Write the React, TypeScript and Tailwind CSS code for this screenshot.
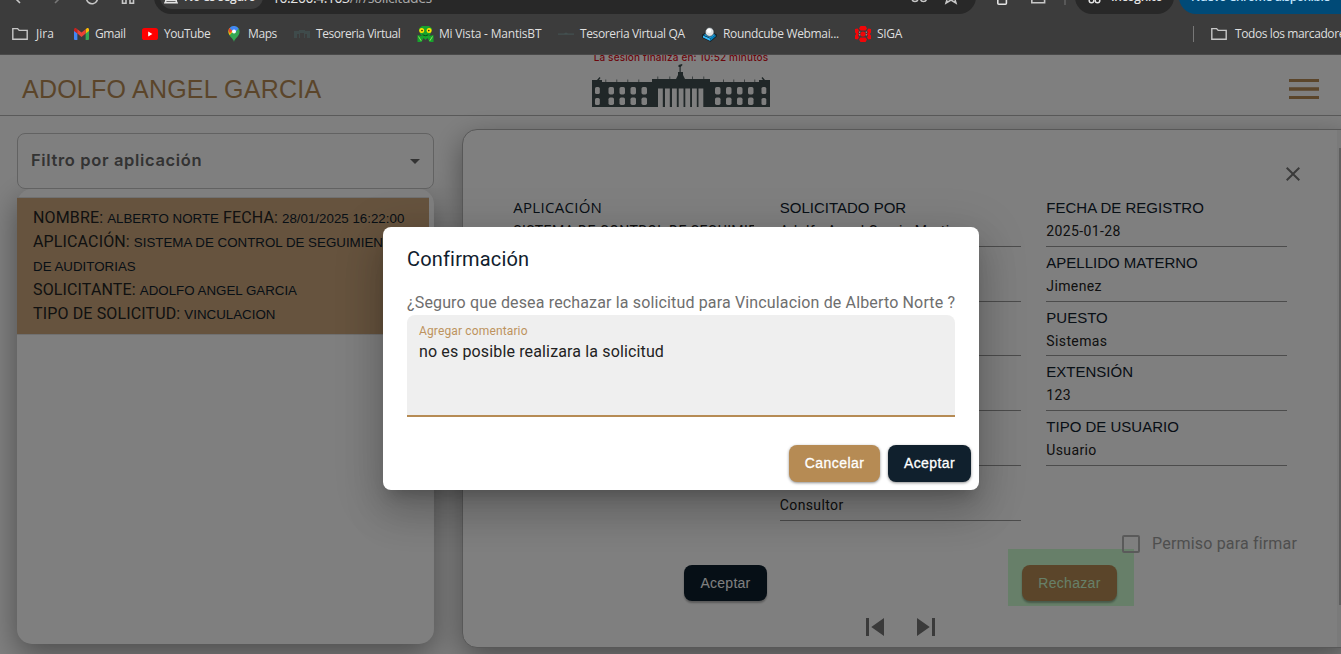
import React from "react";
import { MdClose, MdSkipNext, MdSkipPrevious } from "react-icons/md";

const Folder = () => (
  <svg width="16" height="14" viewBox="0 0 16 14" fill="none" stroke="#c7c7c7" strokeWidth="1.4">
    <path d="M.8 12.2V1.6H5.6L7.2 3.4H15.2V12.2Z" />
  </svg>
);

const Gmail = () => (
  <svg width="15" height="12" viewBox="0 0 16 12" preserveAspectRatio="none">
    <path d="M0 2V11a1 1 0 0 0 1 1H3.6V4.8Z" fill="#4285f4" />
    <path d="M16 2V11a1 1 0 0 1-1 1H12.4V4.8Z" fill="#34a853" />
    <path d="M0 1.6C0 .2 1.5-.4 2.6.4L3.6 1.2V5.6L0 2.9Z" fill="#c5221f" />
    <path d="M16 1.6C16 .2 14.5-.4 13.4.4L12.4 1.2V5.6L16 2.9Z" fill="#fbbc04" />
    <path d="M3.6 1.2L8 4.5L12.4 1.2V5.6L8 8.9L3.6 5.6Z" fill="#ea4335" />
  </svg>
);

const YouTube = () => (
  <svg width="16" height="12" viewBox="0 0 16 12">
    <rect width="16" height="12" rx="2.6" fill="#f00" />
    <path d="M6.2 3.6L10.4 6L6.2 8.4Z" fill="#fff" />
  </svg>
);

const Maps = () => (
  <svg width="12" height="16" viewBox="0 0 12 16">
    <path d="M6 16C5.4 12.4 .4 10.4 .4 5.6A5.6 5.6 0 0 1 11.6 5.6C11.6 10.4 6.6 12.4 6 16Z" fill="#34a853" />
    <path d="M1.7 9.2C.9 8 .4 7 .4 5.6Q.4 3.4 1.7 2L5 5.2Z" fill="#fbbc04" />
    <path d="M1.7 2L4.4 4.6L2 7.4L.5 4.8Q.7 3.2 1.7 2Z" fill="#ea4335" />
    <path d="M1.7 2A5.6 5.6 0 0 1 10.6 2.4L6.4 7.2L4 4.4Z" fill="#4285f4" />
    <circle cx="6" cy="5.6" r="2" fill="#fff" />
  </svg>
);

const MiniBuilding = () => (
  <svg width="16" height="8" viewBox="0 0 16 8" fill="#3f4b4b">
    <path d="M0 1H5V0H11V1H16V8H13V4H11V8H10V3H6V8H5V4H3V8H0Z" />
  </svg>
);

const FaintLine = () => (
  <svg width="16" height="4" viewBox="0 0 16 4" fill="#435050">
    <path d="M0 1.5H6L8 .4L10 1.5H16V2.7H0Z" />
  </svg>
);

const Mantis = () => (
  <svg width="17" height="16" viewBox="0 0 17 16">
    <path d="M2 2.5L5 0H12L15 2.5L13.5 8L12 10L16.5 9V16H12.5L10.5 12L8.5 14L6.5 12L4.5 16H.5V9L5 10L3.2 8Z" fill="#17a32d" />
    <path d="M1.5 10.5L4.2 14.8M15.5 10.5L12.8 14.8" stroke="#8ce05d" />
    <circle cx="4.7" cy="4.6" r="2.5" fill="#ffe100" />
    <circle cx="12.1" cy="4.6" r="2.5" fill="#ffe100" />
    <circle cx="5" cy="4.6" r=".8" fill="#222" />
    <circle cx="11.8" cy="4.6" r=".8" fill="#222" />
    <path d="M5.5 8.8Q8.5 10.6 11.4 8.8" stroke="#064d11" fill="none" />
  </svg>
);

const Roundcube = () => (
  <svg width="15" height="15" viewBox="0 0 15 15">
    <path d="M.3 7.500L7.500 4L14.700 7.500V9.500L8.500 14.800L.3 10.800Z" fill="#10181c" />
    <path d="M1 8.400L8.500 11.800L8.300 14L1 10.400Z" fill="#37beff" />
    <path d="M8.500 11L13.800 8L13.600 9.600L8.500 14Z" fill="#0080be" />
    <path d="M1.500 8L8.500 11.200L13.500 8L11 6.500H4Z" fill="#1a9bdc" />
    <circle cx="7.600" cy="5" r="4.400" fill="#dfe2e4" stroke="#20282c" strokeWidth=".6" />
    <circle cx="7" cy="3.800" r="2.200" fill="#fff" />
  </svg>
);

const Siga = () => (
  <svg width="16" height="16" viewBox="0 0 16 16" fill="#f30508">
    <circle cx="8" cy="8" r="2.6" />
    <path d="M5.500 0H10.500L12 2.500L10.500 4.500H5.500L4 2.500ZM5.500 16H10.500L12 13.500L10.500 11.500H5.500L4 13.500Z" />
    <path d="M0 3L2.600 2.600L4 4.500L3 6.500L4.200 8L3 9.500L4 11.500L2.600 13.400L0 13V9.500L1.200 8L0 6.500ZM16 3L13.400 2.600L12 4.500L13 6.500L11.800 8L13 9.500L12 11.500L13.400 13.400L16 13V9.500L14.800 8L16 6.500Z" />
    <path d="M4.700 5.500V10.500M11.300 5.500V10.500" stroke="#b9aaaa" strokeWidth=".8" strokeDasharray="1.500 1" />
  </svg>
);

type BookmarkProps = { icon: React.ReactNode; text: string; box: string; gap: string; track?: string };

const Bookmark = ({ icon, text, box, gap, track = "" }: BookmarkProps) => (
  <div className={`flex shrink-0 items-center whitespace-nowrap ${box} ${gap}`}>
    {icon}
    <span className={track}>{text}</span>
  </div>
);

const Toolbar = () => (
  <div className="h-[14px] overflow-hidden">
    <div className="-mt-5 flex h-[34px] items-center font-['Open_Sans',sans-serif] text-[13px] text-[#e3e3e3]">
      <svg width="154" height="34" viewBox="0 0 154 34" fill="none" stroke="#c7c7c7" strokeWidth="1.6" className="shrink-0">
        <path d="M20 11L14 17L20 23" />
        <path d="M55 11L61 17L55 23" stroke="#777" />
        <path d="M86.500 18A5.500 5.500 0 1 0 97 16" />
        <path d="M122.500 14V23.200H126V19H130V23.200H133.500V14" />
      </svg>
      <div className="flex h-[34px] w-[822px] shrink-0 items-center rounded-full bg-[#282828] pl-1.5">
        <div className="flex h-6 w-[103px] items-center gap-1.5 rounded-full bg-[#3c3c3c] pl-1">
          <svg width="14" height="14" viewBox="0 0 14 14" fill="none" stroke="#e3e3e3" strokeWidth="1.500">
            <path d="M7 1L13 12.800H1ZM1 10.600H13" />
          </svg>
          <span className="whitespace-nowrap text-[12px] font-semibold tracking-[-0.3px]">No es seguro</span>
        </div>
        <span className="ml-[9px] w-[160px] whitespace-nowrap text-[14px] tracking-[-0.45px]">
          10.200.4.103<span className="text-[#a8a8a8]">/#/solicitudes</span>
        </span>
        <svg width="60" height="34" viewBox="0 0 60 34" fill="none" stroke="#c7c7c7" strokeWidth="1.500" className="ml-[475px]">
          <circle cx="8" cy="18.500" r="3" />
          <circle cx="16.500" cy="18.500" r="3" />
          <path d="M39 23L40.500 18L36 15H42L44 9.500L46 15H52L47.500 18L49 23L44 20Z" />
        </svg>
      </div>
      <svg width="99" height="34" viewBox="0 0 99 34" fill="none" stroke="#e3e3e3" strokeWidth="1.600" className="shrink-0">
        <rect x="21.800" y="12" width="8.600" height="12.200" rx="1" />
        <path d="M55.800 15V22.800H68.600V15" stroke="#c7c7c7" />
        <path d="M89 10V25" stroke="#606060" />
      </svg>
      <div className="flex h-[34px] w-[99px] shrink-0 items-center rounded-full bg-[#282828] pl-3">
        <svg width="16" height="14" viewBox="0 0 16 14" fill="none" stroke="#e3e3e3" strokeWidth="1.500">
          <circle cx="4.500" cy="10.500" r="2.300" />
          <circle cx="10.500" cy="10.500" r="2.300" />
        </svg>
        <span className="ml-2 text-[12px] font-semibold tracking-[-0.3px]">Incógnito</span>
      </div>
      <div className="ml-[5px] flex h-[34px] w-[220px] shrink-0 items-center rounded-full bg-[#004a77] pl-[12px] text-[12px] font-semibold text-[#c2e7ff]">
        <span className="whitespace-nowrap tracking-[-0.5px]">Nuevo Chrome disponible</span>
        <span className="ml-2">⋮</span>
      </div>
    </div>
  </div>
);

const Bookmarks = () => (
  <div className="flex h-10 items-center overflow-hidden pl-3 font-['Open_Sans','Noto_Sans',sans-serif] text-[12px] text-[#dfdfdf]">
    <Bookmark icon={<Folder />} text="Jira" box="w-[62px]" gap="gap-2" />
    <Bookmark icon={<Gmail />} text="Gmail" box="w-[68px]" gap="gap-[6px]" track="tracking-[-0.4px]" />
    <Bookmark icon={<YouTube />} text="YouTube" box="w-[86px]" gap="gap-[6px]" track="tracking-[-0.45px]" />
    <Bookmark icon={<Maps />} text="Maps" box="w-[66px]" gap="gap-2" track="tracking-[-0.4px]" />
    <Bookmark icon={<MiniBuilding />} text="Tesoreria Virtual" box="w-[123px]" gap="gap-[6px]" track="tracking-[-0.45px]" />
    <Bookmark icon={<Mantis />} text="Mi Vista - MantisBT" box="w-[141px]" gap="gap-[5px]" track="tracking-[-0.2px]" />
    <Bookmark icon={<FaintLine />} text="Tesoreria Virtual QA" box="w-[144px]" gap="gap-[6px]" track="tracking-[-0.37px]" />
    <Bookmark icon={<Roundcube />} text="Roundcube Webmai..." box="w-[153px]" gap="gap-[6px]" track="tracking-[-0.35px]" />
    <Bookmark icon={<Siga />} text="SIGA" box="w-[338px]" gap="gap-[6px]" track="tracking-[-0.3px]" />
    <div className="h-4 w-[18px] shrink-0 border-l border-[#777]" />
    <Bookmark icon={<Folder />} text="Todos los marcadores" box="w-[160px]" gap="gap-2" track="tracking-[-0.4px]" />
  </div>
);

const Building = () => (
  <svg width="178" height="44" viewBox="0 0 178 44" className="shrink-0">
    <g fill="#404f50">
      <path d="M0 16H10V18H60V15H84L86 11V8H87.500V3H86.500V1L90 0L90.500 1L88.700 3V8H91V11L93 15H118V18H167V16H178V43H0Z" />
      <path d="M5 16L7.500 13L8.500 14L7 16ZM173 16L170.500 13L169.500 14L171 16Z" />
      <path d="M13.500 15.500H14.200V18H13.500ZM24.500 15.500H25.200V18H24.500ZM35.500 15.500H36.200V18H35.500ZM46.500 15.500H47.200V18H46.500ZM65.500 12.500H66.200V15H65.500ZM77.500 12.500H78.200V15H77.500ZM100 12.500H100.700V15H100ZM111.500 12.500H112.200V15H111.500ZM131 15.500H131.700V18H131ZM141.500 15.500H142.200V18H141.500ZM152 15.500H152.700V18H152ZM162.500 15.500H163.200V18H162.500Z" />
    </g>
    <g fill="#fff">
      {[3, 169.500].map((x) => (
        <g key={x}>
          <rect x={x} y="23" width="4.800" height="7" rx="1.600" />
          <rect x={x} y="34" width="4.800" height="7" rx="1.600" />
        </g>
      ))}
      {[16.500, 27.500, 38.500, 49.500, 123, 134, 145, 156].map((x) => (
        <g key={x}>
          <rect x={x} y="23" width="5.500" height="7.500" rx="1.700" />
          <rect x={x} y="33.500" width="5.500" height="7.500" rx="1.700" />
        </g>
      ))}
      {[66, 73, 80, 86.700, 93.300, 100, 106.500].map((x) => (
        <rect key={x} x={x} y="24.500" width="4.800" height="18.500" />
      ))}
    </g>
  </svg>
);

const Header = () => (
  <header className="flex h-[61px] shrink-0 items-start border-b border-[#b4b4b4]">
    <h1 className="w-[592px] shrink-0 pl-[22px] pt-[20px] font-['Liberation_Sans',sans-serif] text-[25px] leading-7 tracking-[0.23px] text-[#b68b54]">
      ADOLFO ANGEL GARCIA
    </h1>
    <div className="flex w-[178px] shrink-0 flex-col items-center">
      <p className="-mt-[5px] h-[14px] whitespace-nowrap font-['Inter',sans-serif] text-[10px] font-medium leading-[15px] tracking-[0.15px] text-[#d80d18]">
        La sesión finaliza en: 10:52 minutos
      </p>
      <Building />
    </div>
    <div className="flex flex-1 justify-end pr-[22px] pt-[24px]">
      <svg width="30" height="20" viewBox="0 0 30 20" fill="#b68b54">
        <path d="M0 0H30V3H0ZM0 8.300H30V11.700H0ZM0 17H30V20H0Z" />
      </svg>
    </div>
  </header>
);

const RowLine = ({ label, value }: { label: string; value: string }) => (
  <>
    <span className="text-[16px] leading-none tracking-[0.14px] text-[#222]">{label}</span>{" "}
    <span className="font-['Liberation_Sans',sans-serif] text-[13.333px] leading-none text-[#10202d]">{value}</span>
  </>
);

const Sidebar = () => (
  <aside className="ml-[17px] flex w-[417px] shrink-0 flex-col pt-[17px]">
    <div className="z-10 flex h-14 items-center justify-between rounded-[8px] border border-[#c4c4c4] bg-white pl-[13px] pr-[13px]">
      <span className="-mt-[2px] font-['Inter',sans-serif] text-[16.500px] font-semibold tracking-[0.65px] text-[#666]">Filtro por aplicación</span>
      <svg width="10" height="5" viewBox="0 0 10 5" fill="#666">
        <path d="M0 0H10L5 5Z" />
      </svg>
    </div>
    <div className="h-[455px] rounded-[15px] bg-white pt-2 shadow-[0_10px_30px_rgba(0,0,0,0.4)]">
      <div className="h-[138px] w-[412px] border-y border-[#e0e0e0] bg-[#cca77c] pl-4 pt-[8px] font-['Roboto',sans-serif] text-[16px] leading-6">
        <div className="whitespace-nowrap">
          <RowLine label="NOMBRE:" value="ALBERTO NORTE" /> <RowLine label="FECHA:" value="28/01/2025 16:22:00" />
        </div>
        <div className="w-[375px]">
          <RowLine label="APLICACIÓN:" value="SISTEMA DE CONTROL DE SEGUIMIENTO DE AUDITORIAS" />
        </div>
        <div>
          <RowLine label="SOLICITANTE:" value="ADOLFO ANGEL GARCIA" />
        </div>
        <div>
          <RowLine label="TIPO DE SOLICITUD:" value="VINCULACION" />
        </div>
      </div>
    </div>
  </aside>
);

type FieldData = { label: string; value: string; labelFont?: string };

const columns: FieldData[][] = [
  [
    {
      label: "APLICACIÓN",
      value: "SISTEMA DE CONTROL DE SEGUIMIENTO",
      labelFont: "-mt-px mb-px font-['Open_Sans',sans-serif] text-[15px] tracking-[0.28px]",
    },
    { label: "", value: "" },
    { label: "", value: "" },
    { label: "", value: "" },
    { label: "", value: "" },
  ],
  [
    { label: "SOLICITADO POR", value: "Adolfo Angel Garcia Martinez" },
    { label: "", value: "" },
    { label: "", value: "" },
    { label: "", value: "" },
    { label: "", value: "" },
    { label: "", value: "Consultor" },
  ],
  [
    { label: "FECHA DE REGISTRO", value: "2025-01-28" },
    { label: "APELLIDO MATERNO", value: "Jimenez" },
    { label: "PUESTO", value: "Sistemas" },
    { label: "EXTENSIÓN", value: "123" },
    { label: "TIPO DE USUARIO", value: "Usuario" },
  ],
];

const Field = ({ label, value, labelFont = "font-['Liberation_Sans',sans-serif] text-[15px]" }: FieldData) => (
  <div className="flex h-[54.75px] flex-col overflow-hidden border-b border-[#999] pt-[5px]">
    <span className={`h-[22px] whitespace-nowrap leading-[22px] text-[#10202d] ${labelFont}`}>{label}</span>
    <span className="h-6 whitespace-nowrap font-['Roboto',sans-serif] text-[14px] leading-6 tracking-[0.38px] text-[#222]">{value}</span>
  </div>
);

const Detail = () => (
  <section className="ml-7 mt-[13px] flex h-[519px] w-[885px] shrink-0 rounded-l-[15px] border border-[#b0b0b0] bg-white shadow-[0_10px_30px_rgba(0,0,0,0.4)]">
    <div className="flex w-[874px] shrink-0 flex-col">
      <div className="flex justify-end pr-[32px] pt-[32px]">
        <MdClose size={24} className="text-[#757575]" />
      </div>
      <div className="mt-[6px] flex h-[329px] gap-[25.500px] pl-[50.300px]">
        {columns.map((fields, i) => (
          <div key={i} className="w-[241px] shrink-0">
            {fields.map((field, j) => (
              <Field key={j} {...field} />
            ))}
          </div>
        ))}
      </div>
      <div className="z-10 mt-[14px] flex h-[18px] items-center justify-end gap-3 pr-[40px]">
        <div className="h-[18px] w-[18px] rounded-[2px] border-2 border-[#b5b5b5]" />
        <span className="font-['Roboto',sans-serif] text-[16px] tracking-[0.17px] text-[#9d9d9d]">Permiso para firmar</span>
      </div>
      <div className="-mt-[4px] flex h-[59px] items-start pl-[221px]">
        <button className="mt-[16px] h-[36px] w-[83px] rounded-[8px] bg-[#0c1e2c] font-['Liberation_Sans',sans-serif] text-[14px] tracking-[0.25px] text-white shadow-[0_2px_2px_rgba(0,0,0,0.3)]">
          Aceptar
        </button>
        <div className="ml-[241px] h-[57px] w-[126px] bg-[#ceffd2] pl-[14px] pt-4">
          <button className="h-[36px] w-[95px] rounded-[8px] bg-[#b68b54] font-['Liberation_Sans',sans-serif] text-[14px] tracking-[0.3px] text-[#ceffd2] shadow-[0_2px_2px_rgba(0,0,0,0.3)]">
            Rechazar
          </button>
        </div>
      </div>
      <div className="mt-[0.500px] flex gap-[15px] pl-[393.500px]">
        <MdSkipPrevious size={36} className="text-[#757575]" />
        <MdSkipNext size={36} className="text-[#757575]" />
      </div>
    </div>
    <div className="w-[10px] shrink-0 bg-[#f4f4f4] pl-[2px] pt-[18px]">
      <div className="h-[457px] bg-[#bcbcbc]" />
    </div>
  </section>
);

const Dialog = () => (
  <div className="absolute left-[383px] top-[172px] flex h-[263px] w-[596px] flex-col rounded-[8px] bg-white px-6 font-['Roboto',sans-serif] shadow-[0_11px_15px_-7px_rgba(0,0,0,0.2),0_24px_38px_3px_rgba(0,0,0,0.14),0_9px_46px_8px_rgba(0,0,0,0.12)]">
    <h2 className="mt-4 h-8 whitespace-nowrap text-[20px] leading-8 tracking-[0.17px] text-[#10202d]">Confirmación</h2>
    <p className="mt-4 h-6 whitespace-nowrap text-[16px] leading-6 tracking-[0.15px] text-[#6e6e6e]">
      ¿Seguro que desea rechazar la solicitud para Vinculacion de Alberto Norte ?
    </p>
    <div className="h-[102px] rounded-t-[8px] border-b-2 border-[#b68b54] bg-[#efefef] px-3 pt-2">
      <div className="h-[17px] whitespace-nowrap text-[12px] leading-4 tracking-[0.14px] text-[#bd935e]">Agregar comentario</div>
      <div className="whitespace-nowrap text-[16px] leading-6 tracking-[0.14px] text-[#222]">no es posible realizara la solicitud</div>
    </div>
    <div className="-mr-4 mt-7 flex justify-end gap-2 font-['Liberation_Sans',sans-serif] text-[14px] text-white [-webkit-text-stroke:0.3px_white]">
      <button className="h-[37px] w-[91px] rounded-[8px] bg-[#b68b54] tracking-[0.45px] shadow-[0_1px_3px_rgba(0,0,0,0.45)]">Cancelar</button>
      <button className="h-[37px] w-[83px] rounded-[8px] bg-[#10202d] tracking-[0.4px] shadow-[0_1px_3px_rgba(0,0,0,0.45)]">Aceptar</button>
    </div>
  </div>
);

export default function App() {
  return (
    <div className="flex h-[654px] w-[1341px] flex-col overflow-hidden bg-[#3c3c3c]">
      <Toolbar />
      <Bookmarks />
      <div className="h-px shrink-0 bg-[#4a4a4a]" />
      <div className="relative flex h-[599px] shrink-0 flex-col overflow-hidden bg-white">
        <Header />
        <main className="isolate flex min-h-0 flex-1">
          <Sidebar />
          <Detail />
        </main>
        <div className="absolute inset-0 bg-black/50" />
        <Dialog />
      </div>
    </div>
  );
}
